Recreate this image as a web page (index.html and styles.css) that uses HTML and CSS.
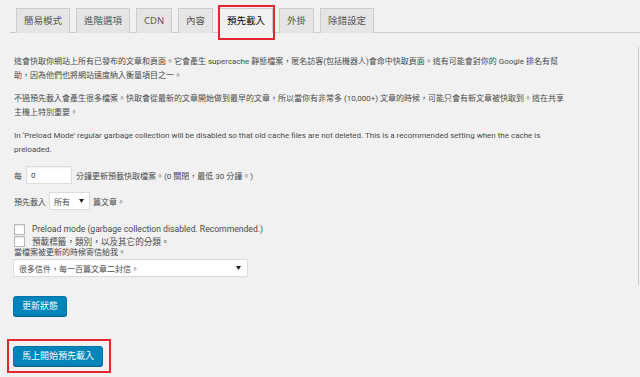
FILE: index.html
```html
<!DOCTYPE html>
<html lang="zh-Hant">
<head>
    <meta charset="UTF-8">
    <meta name="viewport" content="width=device-width, initial-scale=1.0">
    <title>WP Super Cache - 預先載入</title>
    <link rel="stylesheet" href="styles.css">
</head>
<body>
    <!-- Settings tabs -->
    <nav class="nav-tabs">
        <a class="nav-tab">簡易模式</a>
        <a class="nav-tab">進階選項</a>
        <a class="nav-tab">CDN</a>
        <a class="nav-tab">內容</a>
        <a class="nav-tab nav-tab-active">預先載入</a>
        <a class="nav-tab">外掛</a>
        <a class="nav-tab">除錯設定</a>
    </nav>

    <div class="panel">
        <p>這會快取你網站上所有已發布的文章和頁面。它會產生 supercache 靜態檔案，匿名訪客(包括機器人)會命中快取頁面。這有可能會對你的 Google 排名有幫<br>助，因為他們也將網站速度納入衡量項目之一。</p>
        <p>不過預先載入會產生很多檔案。快取會從最新的文章開始做到最早的文章，所以當你有非常多 (10,000+) 文章的時候，可能只會有新文章被快取到。這在共享<br>主機上特別重要。</p>
        <p>In ‘Preload Mode’ regular garbage collection will be disabled so that old cache files are not deleted. This is a recommended setting when the cache is<br>preloaded.</p>

        <div class="row row-interval">
            <span>每</span>
            <input class="text-input" type="text" value="0">
            <span>分鐘更新預載快取檔案。(0 關閉，最低 30 分鐘。)</span>
        </div>

        <div class="row row-posts">
            <span>預先載入</span>
            <div class="select select-small">
                <span>所有</span>
                <svg width="5" height="4" viewBox="0 0 5 4"><path d="M0 0h5L2.5 4z" fill="#222"/></svg>
            </div>
            <span>篇文章。</span>
        </div>

        <label class="check-row first">
            <input type="checkbox">
            <span>Preload mode (garbage collection disabled. Recommended.)</span>
        </label>
        <label class="check-row">
            <input type="checkbox">
            <span>預載標籤，類別，以及其它的分類。</span>
        </label>
        <div class="mail-label">當檔案被更新的時候寄信給我。</div>
        <div class="select select-wide">
            <span>很多信件，每一百篇文章二封信。</span>
            <svg width="5" height="4" viewBox="0 0 5 4"><path d="M0 0h5L2.5 4z" fill="#222"/></svg>
        </div>
    </div>

    <div class="actions">
        <button class="button-primary">更新狀態</button>
        <div class="highlight">
            <button class="button-primary">馬上開始預先載入</button>
        </div>
    </div>
</body>
</html>
```

FILE: styles.css
```css
body {
    margin: 0;
    background: #f1f1f1;
    color: #4a4a4a;
    font-family: Roboto, "Noto Sans CJK TC", sans-serif;
    font-size: 8px;
}
.nav-tabs {
    display: flex;
    gap: 6px;
    margin-left: 10px;
    padding: 8px 0 0 6px;
    border-bottom: 1px solid #ccc;
}
.nav-tab {
    display: block;
    height: 25px;
    line-height: 24px;
    padding: 0 7px;
    margin-bottom: -1px;
    border: 1px solid #ccc;
    border-bottom: none;
    box-sizing: border-box;
    background: #e5e5e5;
    color: #555;
    font-family: "Open Sans", "Noto Sans CJK TC", sans-serif;
    font-size: 9.5px;
}
.nav-tab-active {
    position: relative;
    background: #f1f1f1;
    color: #000;
}
.nav-tab-active::after {
    content: "";
    position: absolute;
    top: -4px;
    left: -2px;
    right: -3px;
    bottom: -7px;
    border: 2px solid #e3262f;
}
.panel {
    margin: 14px 1px 0 14px;
    padding: 8px 0 8px;
    border-right: 1px solid #ccc;
}
.panel p {
    margin: 0 0 10px;
    line-height: 13.5px;
    white-space: nowrap;
}
.row {
    display: flex;
    align-items: center;
    gap: 4px;
}
.row-interval {
    margin-top: 7px;
}
.row-posts {
    margin-top: 8px;
    gap: 3px;
}
.text-input {
    width: 46px;
    height: 18px;
    box-sizing: border-box;
    margin: 0;
    padding: 0 4px;
    border: 1px solid #ddd;
    background: #fff;
    box-shadow: inset 0 1px 2px rgba(0,0,0,0.07);
    font: inherit;
    color: #444;
}
.select {
    display: flex;
    align-items: center;
    justify-content: space-between;
    box-sizing: border-box;
    border: 1px solid #ddd;
    background: #fff;
    box-shadow: 0 1px 1px -1px rgba(0,0,0,0.1);
}
.select-small {
    width: 41px;
    height: 18px;
    padding: 0 5px 0 4px;
}
.select-wide {
    width: 235px;
    height: 18px;
    margin-left: -1px;
    padding: 0 6px 0 5px;
}
.check-row {
    display: flex;
    align-items: center;
    gap: 7px;
    height: 12px;
    font-size: 8.6px;
}
.check-row.first {
    margin-top: 13px;
}
.check-row input {
    appearance: none;
    -webkit-appearance: none;
    width: 11px;
    height: 11px;
    margin: 0;
    border: 1px solid #b4b9be;
    background: #fff;
    box-shadow: inset 0 1px 2px rgba(0,0,0,0.1);
}
.mail-label {
    line-height: 12px;
}
.actions {
    padding: 11px 0 0 13px;
}
.button-primary {
    display: block;
    height: 20px;
    padding: 0 8px;
    border: 1px solid #0073aa;
    border-radius: 3px;
    background: #0085ba;
    box-shadow: 0 1px 0 #006799;
    color: #fff;
    font-family: inherit;
    font-size: 9px;
    line-height: 18px;
}
.highlight {
    display: inline-block;
    margin: 23px 0 0 -6px;
    padding: 5px 6px 5px 4px;
    border: 2px solid #e3262f;
}
```
